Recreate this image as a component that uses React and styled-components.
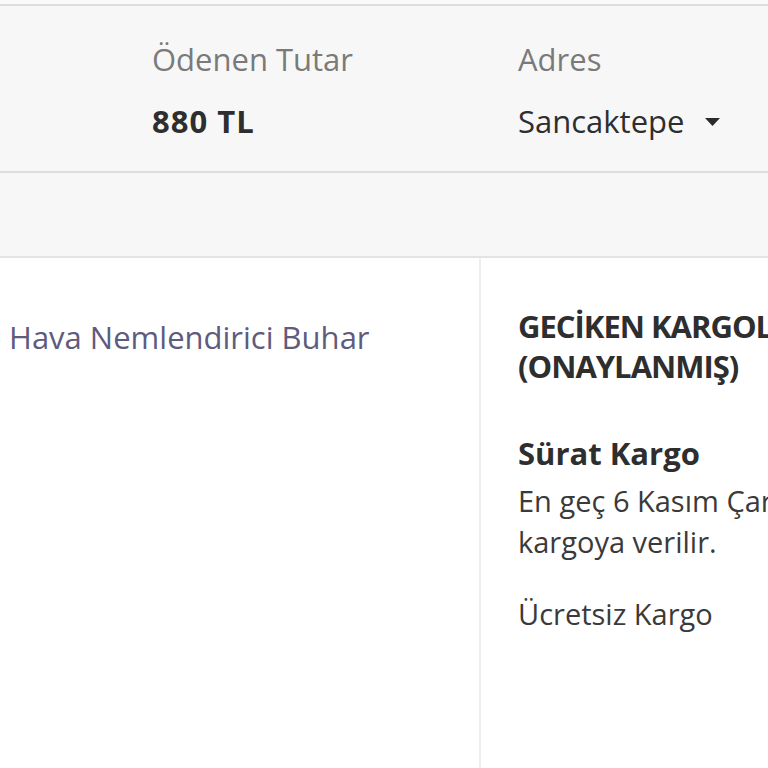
import React from "react";
import styled, { createGlobalStyle } from "styled-components";

const Global = createGlobalStyle`
  html, body { margin: 0; padding: 0; }
  body {
    background: #ffffff;
    font-family: "Open Sans", "Noto Sans", sans-serif;
    overflow: hidden;
    width: 768px;
    height: 768px;
  }
`;

const Page = styled.div`
  width: 768px;
  height: 768px;
  overflow: hidden;
  background: #fafafa;
  padding-top: 4px;
  box-sizing: border-box;
  display: flex;
  flex-direction: column;
`;

const Summary = styled.div`
  display: flex;
  background: #f7f7f7;
  border-top: 2px solid #dedede;
  border-bottom: 2px solid #dedede;
  padding: 33px 0 30px 152px;
`;

const Field = styled.div`
  display: flex;
  flex-direction: column;
  gap: 22px;
  width: ${(p) => p.$width || "auto"};
  flex-shrink: 0;
`;

const Label = styled.div`
  font-size: 31px;
  line-height: 40px;
  color: #7a7a7a;
  white-space: nowrap;
`;

const Value = styled.div`
  font-size: 31px;
  line-height: 40px;
  color: #2e2e2e;
  font-weight: ${(p) => (p.$bold ? 700 : 400)};
  letter-spacing: ${(p) => (p.$bold ? "1px" : "0")};
  white-space: nowrap;
  display: flex;
  align-items: center;
`;

const Caret = styled.svg`
  margin-left: 21px;
  width: 15px;
  height: 8px;
  margin-top: 2px;
`;

const Strip = styled.div`
  height: 83px;
  background: #f7f7f7;
  border-bottom: 2px solid #e4e4e4;
  flex-shrink: 0;
`;

const Content = styled.div`
  display: flex;
  flex: 1;
  background: #ffffff;
`;

const ProductCol = styled.div`
  width: 481px;
  flex-shrink: 0;
  border-right: 2px solid #eeeeee;
  padding-top: 59px;
  overflow: hidden;
  box-sizing: border-box;
`;

const ProductName = styled.div`
  font-size: 31px;
  line-height: 40px;
  color: #5e5b7e;
  white-space: nowrap;
  margin-left: -9px;
`;

const CargoCol = styled.div`
  padding: 48px 0 0 37px;
  display: flex;
  flex-direction: column;
  white-space: nowrap;
`;

const CargoTitle = styled.div`
  font-size: 31px;
  line-height: 40px;
  font-weight: 700;
  letter-spacing: -1px;
  color: #2e2e2e;
`;

const Carrier = styled.div`
  font-size: 31px;
  line-height: 40px;
  font-weight: 700;
  color: #2e2e2e;
  margin-top: 47px;
`;

const Note = styled.div`
  font-size: 29px;
  line-height: 41px;
  color: #3a3a3a;
  margin-top: ${(p) => p.$top || 0}px;
`;

export default function App() {
  return (
    <>
      <Global />
      <Page>
        <Summary>
          <Field $width="366px">
            <Label>Ödenen Tutar</Label>
            <Value $bold>880 TL</Value>
          </Field>
          <Field>
            <Label>Adres</Label>
            <Value>
              Sancaktepe
              <Caret viewBox="0 0 15 8">
                <path d="M0 0 H15 L7.5 8 Z" fill="#2a2a2a" />
              </Caret>
            </Value>
          </Field>
        </Summary>
        <Strip />
        <Content>
          <ProductCol>
            <ProductName>- Hava Nemlendirici Buhar</ProductName>
          </ProductCol>
          <CargoCol>
            <CargoTitle>GECİKEN KARGOLARDA İADE</CargoTitle>
            <CargoTitle>(ONAYLANMIŞ)</CargoTitle>
            <Carrier>Sürat Kargo</Carrier>
            <Note $top={7}>En geç 6 Kasım Çarşamba günü</Note>
            <Note>kargoya verilir.</Note>
            <Note $top={31}>Ücretsiz Kargo</Note>
          </CargoCol>
        </Content>
      </Page>
    </>
  );
}
